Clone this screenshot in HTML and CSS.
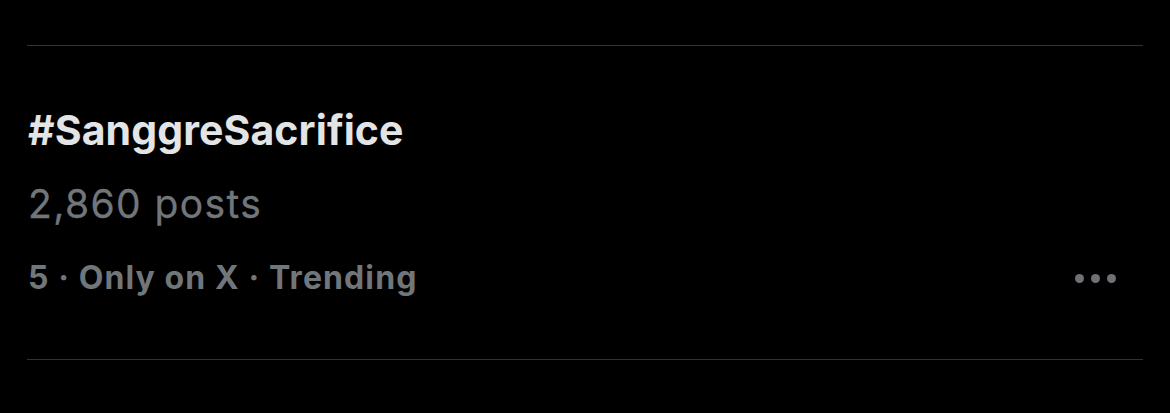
FILE: index.html
```html
<!DOCTYPE html>
<html>
<head>
<meta charset="utf-8">
<link rel="stylesheet" href="styles.css">
</head>
<body>
<div class="page">
  <div class="divider top"></div>
  <div class="trend">
    <div class="title">#SanggreSacrifice</div>
    <div class="count">2,860 posts</div>
    <div class="meta-row">
      <div class="meta">5 · Only on X · Trending</div>
      <div class="more" aria-label="More">
        <span class="dot"></span><span class="dot"></span><span class="dot"></span>
      </div>
    </div>
  </div>
  <div class="divider bottom"></div>
</div>
</body>
</html>
```

FILE: styles.css
```css
html, body {
  margin: 0;
  padding: 0;
  background: #000;
  width: 1170px;
  height: 413px;
  overflow: hidden;
}
.page {
  padding: 45px 27px 0 27px;
}
.divider {
  height: 1px;
  background: #2f3336;
}
.trend {
  padding: 60px 0 0 1px;
  height: 313px;
  box-sizing: border-box;
}
.title {
  font-family: Inter, "Noto Sans", sans-serif;
  font-weight: 700;
  font-size: 41px;
  line-height: 48px;
  color: #e2e4e5;
  letter-spacing: 0.1px;
}
.count {
  font-family: Inter, "Noto Sans", sans-serif;
  font-weight: 400;
  font-size: 39px;
  line-height: 48px;
  margin-top: 26px;
  color: #71767b;
  letter-spacing: 1.4px;
  -webkit-text-stroke: 0.3px #71767b;
}
.meta-row {
  display: flex;
  align-items: center;
  justify-content: space-between;
  margin-top: 30px;
}
.meta {
  font-family: Inter, "Noto Sans", sans-serif;
  font-weight: 700;
  font-size: 32px;
  line-height: 40px;
  color: #71767b;
  letter-spacing: 1.1px;
}
.more {
  display: flex;
  gap: 7px;
  margin-right: 27px;
}
.dot {
  width: 9px;
  height: 9px;
  border-radius: 50%;
  background: #6e7175;
}
```
